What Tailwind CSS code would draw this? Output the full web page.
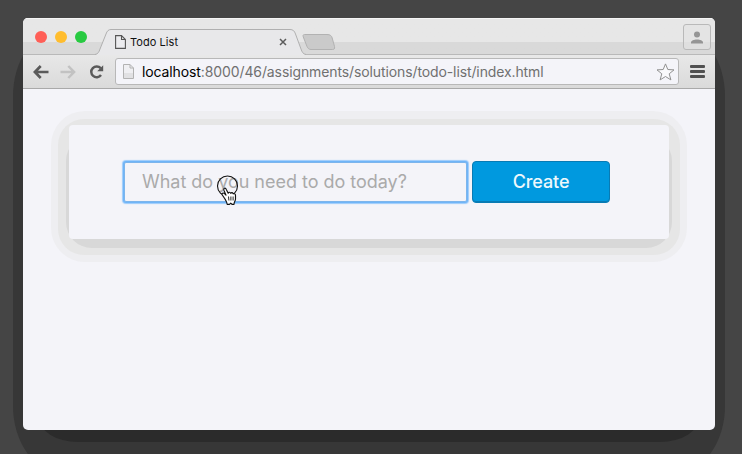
<!DOCTYPE html>
<html lang="en">
<head>
<meta charset="utf-8">
<title>Todo List</title>
<script src="https://cdn.jsdelivr.net/npm/@tailwindcss/browser@4"></script>
</head>
<body class="relative h-[454px] w-[742px] overflow-hidden bg-[#454545] font-['Inter',sans-serif]">
<!-- stepped window shadow -->
<div class="absolute left-[13px] top-[30px] h-[442px] w-[712px] rounded-[48px/66px] bg-[#373737]"></div>
<div class="absolute left-[38px] top-[370px] h-[72px] w-[662px] rounded-[40px/26px] bg-[#2b2b2b]"></div>

<main class="relative ml-[23px] mt-[18px] flex h-[412px] w-[692px] flex-col overflow-hidden rounded-[5px] bg-[#f4f4f9]">
  <header class="relative flex h-[37px] shrink-0 bg-linear-to-b from-[#e7e7e7] from-[24px] to-[#d9d9d9] to-[24px] shadow-[inset_0_1px_0_#f5f5f5]">
    <svg class="absolute inset-0" width="692" height="37" viewBox="0 0 692 37" fill="none">
      <path d="M0 36.5H692" stroke="#b9b9b9"/>
      <path d="M72 37C75 36 76 34 77 31L83 16C84 13 85.500 11.500 88 11.500H267C270 11.500 271.500 13 272.500 16L278 31C279 34 280 36 283 37Z" fill="#e8e8ea"/>
      <path d="M72 36.500C75 36 76 34 77 31L83 16C84 13 85.500 11.500 88 11.500H267C270 11.500 271.500 13 272.500 16L278 31C279 34 280 36 283 36.500" stroke="#b0b0b0"/>
      <path d="M281.500 16.500H304C307 16.500 308.500 17.500 309.200 20L311.500 28.500C312 31 311 31.500 309.500 31.500H288C286 31.500 285 30.500 284 28.500L280.300 19C279.800 17.500 280 16.500 281.500 16.500Z" fill="#cacaca" stroke="#b2b2b2"/>
    </svg>
    <div class="relative flex h-[38px] w-[91px] items-center gap-2 pl-3">
      <span class="size-3 rounded-full bg-[#ff5f57]"></span>
      <span class="size-3 rounded-full bg-[#ffbd2e]"></span>
      <span class="size-3 rounded-full bg-[#28ca41]"></span>
    </div>
    <div class="relative flex h-[37px] w-[175px] items-center pt-[11px]">
      <svg class="ml-px" width="11" height="14" viewBox="0 0 11 14" fill="#ececef" stroke="#555" stroke-width="1.1"><path d="M.6.6H6.500L10.400 4.500V13.400H.6ZM6.500.6V4.500H10.400"/></svg>
      <span class="ml-1 text-[11px] leading-none tracking-[0.06px] text-[#111]">Todo List</span>
      <svg class="ml-auto mr-[2px]" width="8" height="8" viewBox="0 0 8 8" stroke="#5c5c5c" stroke-width="1.5"><path d="M1 1L7 7M7 1L1 7"/></svg>
    </div>
    <div class="relative ml-auto mr-1 mt-[6px] flex h-[26px] w-7 items-center justify-center rounded-[3px] border border-[#b9b9b9] bg-[#e3e3e3]/60">
      <svg width="12" height="13" viewBox="0 0 12 13" fill="#959595"><circle cx="6" cy="3.500" r="3"/><path d="M0 12.500V11.500C0 9.500 3 8.500 6 8.500S12 9.500 12 11.500V12.500Z"/></svg>
    </div>
  </header>

  <nav class="flex h-[34px] shrink-0 items-center border-b border-[#a9a9a9] bg-linear-to-b from-[#e8e8e8] to-[#dadada] pl-[10px]">
    <svg width="16" height="14" viewBox="0 0 16 14" fill="none" stroke="#5a5a5a" stroke-width="2.700"><path d="M15.500 7H2.500M7.700 1L1.900 7L7.700 13"/></svg>
    <svg class="ml-[11px]" width="16" height="14" viewBox="0 0 16 14" fill="none" stroke="#c2c2c2" stroke-width="2.500"><path d="M.5 7H13.500M8.300 1L14.100 7L8.300 13"/></svg>
    <svg class="ml-[13px]" width="15" height="14" viewBox="0 0 15 14" fill="none"><path d="M11.700 3.200A5.400 5.400 0 1 0 12 10" stroke="#5a5a5a" stroke-width="2.500"/><path d="M14.200.3V6.300H8.200Z" fill="#5a5a5a"/></svg>
    <div class="ml-[11px] flex h-[27px] w-[564px] items-center rounded-[3px] border border-[#b8b8b8] bg-[#f4f4f9] pl-[7px] pr-[3px]">
      <svg width="11" height="15" viewBox="0 0 11 15" stroke="#b2b2b2"><path d="M.5.500H7L10.500 4V14.500H.5Z" fill="#efeff2"/><path d="M1 9H10V14H1Z" fill="#e1e1e3" stroke="none"/><path d="M7 .500V4H10.500" fill="none"/></svg>
      <span class="ml-[8px] whitespace-nowrap text-[14px] leading-none tracking-[-0.11px] text-[#707070]"><span class="text-black">localhost</span>:8000/46/assignments/solutions/todo-list/index.html</span>
      <svg class="ml-auto" width="19" height="18" viewBox="0 0 19 18" fill="#f9f9fb" stroke="#909090" stroke-linejoin="round"><path d="M9.500.9L11.800 6.500L18 6.900L13.200 10.800L14.900 16.900L9.500 13.500L4.100 16.900L5.800 10.800L1 6.900L7.200 6.500Z"/></svg>
    </div>
    <div class="ml-[11px] flex w-[15px] flex-col gap-[2px]">
      <span class="h-[3px] rounded-[1px] bg-[#505050]"></span><span class="h-[3px] rounded-[1px] bg-[#505050]"></span><span class="h-[3px] rounded-[1px] bg-[#505050]"></span>
    </div>
  </nav>

  <section class="relative ml-[46px] mt-9 h-[114px] w-[600px]">
    <div class="absolute -inset-x-[18px] -bottom-[23px] -top-[14px] rounded-[34px] bg-[#eeeef1]"></div>
    <div class="absolute -inset-x-[11px] -bottom-4 -top-[6px] rounded-[26px] bg-[#e6e6e6]"></div>
    <div class="absolute -inset-x-[3px] -bottom-[9px] top-[10px] rounded-[26px] bg-[#d8d8d8]"></div>
    <form class="relative flex h-full gap-[5px] rounded-[4px] bg-[#f4f4f9] pl-[55px] pt-9">
      <input type="text" placeholder="What do you need to do today?" class="mt-px h-[40px] w-[343px] rounded-[2px] border border-[#7db5ec] bg-[#f4f4f9] px-[17px] pb-[2px] text-[18px] tracking-[-0.02px] shadow-[0_0_0_1px_#70b5f8,0_0_1px_2px_#9ccbfb] outline-none placeholder:text-[#aaa]">
      <button type="button" class="h-[42px] w-[138px] rounded-[4px] border border-[#087bb4] bg-[#0099df] pb-px text-[18px] font-medium tracking-[-0.1px] text-[#eef8fc] shadow-[inset_0_-1px_0_#087bb4]">Create</button>
    </form>
  </section>
</main>

<!-- click pointer -->
<svg class="absolute left-[216px] top-[174px]" width="24" height="34" viewBox="0 0 24 34" fill="none">
  <circle cx="11.500" cy="12" r="10" stroke="#111" stroke-width="1.100"/>
  <path d="M9 25L6.300 21C5.300 19.200 7.200 18.300 8.500 19.700L10 21.200L7.900 16.200C7.200 14 9.500 13.400 10.300 15.400L12.200 19.200C12.700 17.800 14.200 18 14.700 19.300C15.500 18.200 16.800 18.500 17.200 19.800C18.400 19.200 19.500 20 19.500 21.500V25C19.500 27 18 27.700 18 30.300H16L14.700 29.200L13.500 30.300H11.200C11 28 10 27 9 25Z" fill="#fff" stroke="#111" stroke-width="1.150" stroke-linejoin="round"/>
  <path d="M12.500 22.500L12.900 26.500M14.900 22.500V26.500M17.100 22.500V26.500" stroke="#111" stroke-width=".9"/>
</svg>
</body>
</html>
